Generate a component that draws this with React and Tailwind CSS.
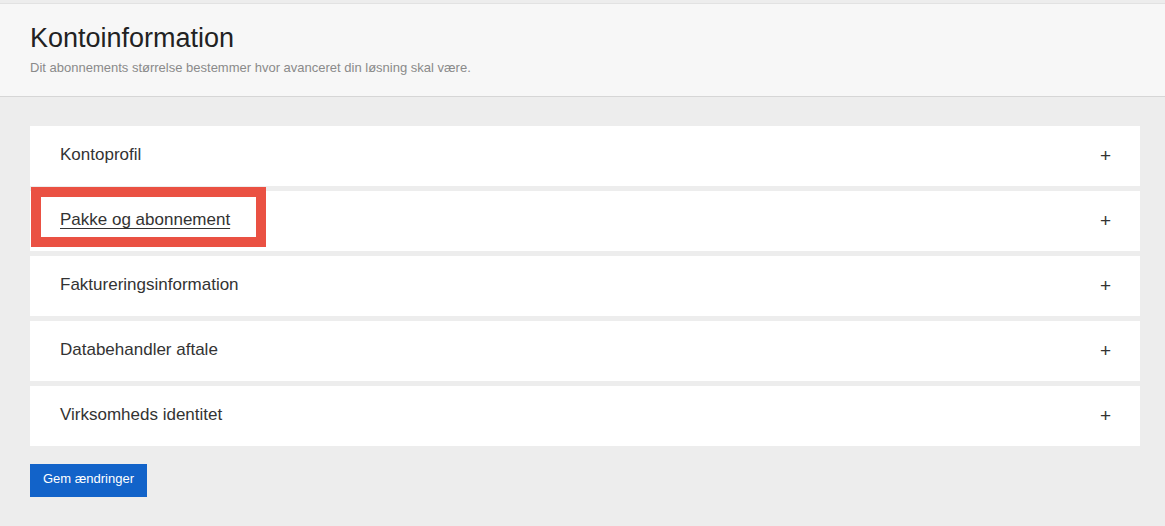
const sections = [
  { key: "profil", label: "Kontoprofil" },
  { key: "pakke", label: "Pakke og abonnement", highlight: true },
  { key: "faktura", label: "Faktureringsinformation" },
  { key: "databehandler", label: "Databehandler aftale" },
  { key: "identitet", label: "Virksomheds identitet" },
]

function Section({ label, highlight }) {
  return (
    <div className="relative flex items-center justify-between h-[60px] bg-white pl-[30px] pr-[29px] pb-[2px]">
      <span className={`text-[17px] text-[#333] ${highlight ? "underline underline-offset-[3px] decoration-1" : ""}`}>
        {label}
      </span>
      <span className="text-[19px] leading-none text-[#333]">+</span>
      {highlight && (
        <div className="absolute left-px top-[-4px] w-[235px] h-[60px] border-[10px] border-[#ea5143]" />
      )}
    </div>
  )
}

export default function App() {
  return (
    <div className="min-h-screen bg-[#ededed] pt-[3px] font-['Liberation_Sans',Arial,sans-serif]">
      <div className="bg-[#f7f7f7] border-t border-b border-[#e2e2e2] border-b-[#d6d6d6] h-[94px] px-[30px] pt-[19px]">
        <h1 className="text-[27px] leading-[30px] text-[#222]">Kontoinformation</h1>
        <p className="mt-[5px] text-[13px] text-[#8a8a8a]">
          Dit abonnements størrelse bestemmer hvor avanceret din løsning skal være.
        </p>
      </div>
      <div className="pl-[30px] pr-[25px] pt-[29px] pb-[30px]">
        <div className="flex flex-col gap-[5px]">
          {sections.map(s => (
            <Section key={s.key} label={s.label} highlight={s.highlight} />
          ))}
        </div>
        <button className="mt-[18px] h-[33px] w-[117px] pb-[3px] bg-[#1263c9] text-white text-[13px]">
          Gem ændringer
        </button>
      </div>
    </div>
  )
}
